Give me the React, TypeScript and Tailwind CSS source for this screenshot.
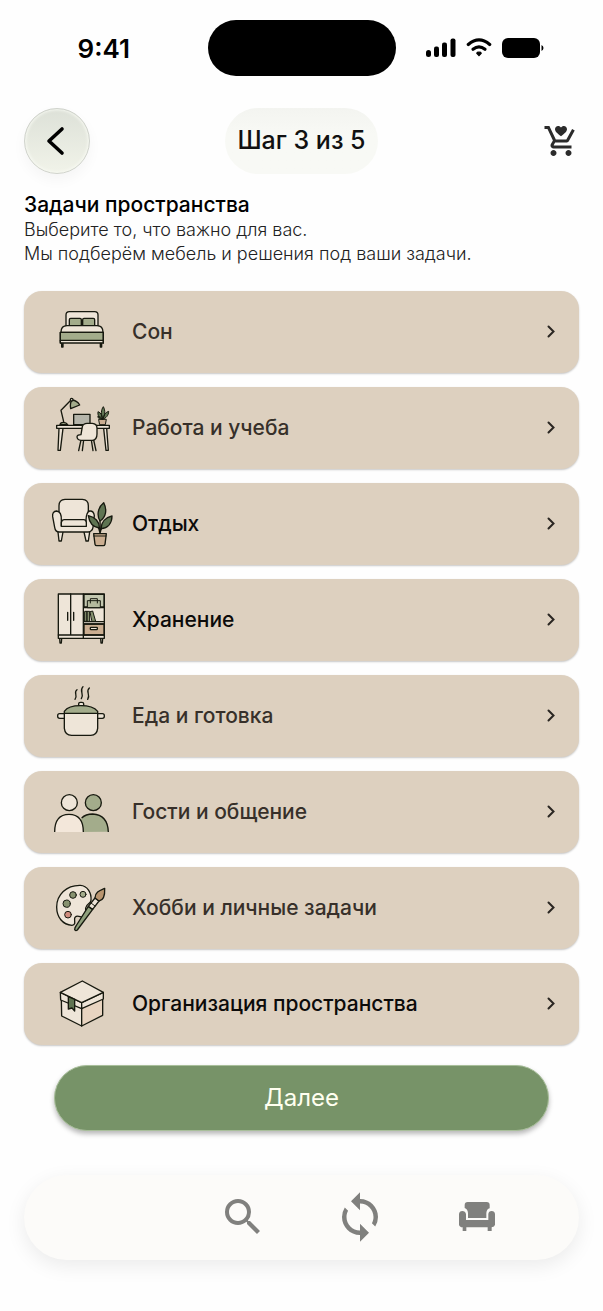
import { useState, type ReactNode } from 'react'
import { MdSearch, MdSync } from 'react-icons/md'

const INK = '#17190f'
const CREAM = '#eee5d8'
const SAGE = '#a3ac8b'
const LEAF = '#5f7452'
const TAN = '#cbae91'

function TaskIcon({ viewBox, children }: { viewBox: string; children: ReactNode }) {
  return (
    <svg
      viewBox={viewBox}
      className="w-18 h-18 shrink-0"
      fill="none"
      stroke={INK}
      strokeWidth="4"
      strokeLinejoin="round"
      strokeLinecap="round"
      aria-hidden="true"
    >
      {children}
    </svg>
  )
}

const BedIcon = () => (
  <TaskIcon viewBox="78 33 216 216">
    <path d="M138 123V90q0-10 10-10h76q10 0 10 10v33z" fill={CREAM} />
    <rect x="148" y="100" width="36" height="24" rx="4" fill={SAGE} />
    <rect x="188" y="100" width="36" height="24" rx="4" fill={SAGE} />
    <path d="M123 142q0-20 18-20h90q18 0 18 20z" fill={CREAM} />
    <path d="M121 142h129v26H121z" fill={SAGE} />
    <path d="M121 166h129v8H121z" fill={CREAM} />
    <path d="M121 142v32M250 142v32" />
    <path d="M125 175v11h4v-11M241 175v11h4v-11" fill={CREAM} />
  </TaskIcon>
)

const DeskIcon = () => (
  <TaskIcon viewBox="78 321 216 216">
    <path d="M131 410l-8-34 30-31" />
    <path d="M120 419q1-7 10-7t13 7z" fill={SAGE} />
    <path d="M152 371q-3-17 4-26 16 2 23 15z" fill={SAGE} />
    <circle cx="155" cy="344" r="4" fill={CREAM} />
    <path d="M161 419v-31h49v31z" fill="#b5b5aa" />
    <path d="M117 430l-3 66h7l8-66M251 430l7 66h7l-5-66" fill={CREAM} />
    <path d="M110 421h158v9H110z" fill={CREAM} />
    <path d="M237 403h22l-3 16h-16z" fill={TAN} strokeWidth="3" />
    <path
      d="M248 402c-6-12-5-28 2-37 7 12 5 27-2 37zM247 402c-12-3-14-12-13-22 9 3 14 13 13 22zM249 402c2-12 7-20 17-23 0 12-8 21-17 23zM247 403c-8 0-12-3-14-8 7-1 11 2 14 8z"
      fill={LEAF}
      strokeWidth="3"
    />
    <path d="M183 465l-7 32M191 465l-4 32M214 465l5 32M221 465l7 32" />
    <path
      d="M183 449l4-24q3-10 14-10h16q14 1 14 15v17q0 18-14 19h-34q-11-1-12-10 0-7 12-7z"
      fill={CREAM}
    />
  </TaskIcon>
)

const ArmchairIcon = () => (
  <TaskIcon viewBox="78 39 216 216">
    <path d="M114 171l3 27h7l5-27M192 171l6 27h7l4-27" fill={CREAM} />
    <path d="M117 118V92q0-18 18-19h52q18 1 18 19v48h-88z" fill={CREAM} />
    <path
      d="M124 135q1-25-14-27-14 1-12 17l6 32q2 14 14 14h87q12-2 14-14l4-35q-2-15-14-14-10 3-11 27v18h-74z"
      fill={CREAM}
    />
    <path d="M124 154v-12q2-8 9-8h58q7 0 8 8v12z" fill={CREAM} />
    <path d="M241 176l-1-42M240 175c-1-17-8-22-14-31M240 175c2-14 8-20 14-28" />
    <path
      d="M240 138c-10-16-7-41 11-55 11 22 7 44-11 55zM238 159c-18-2-30-15-33-37 20 4 34 18 33 37zM243 161c1-19 13-34 33-38 0 21-12 36-33 38z"
      fill={LEAF}
    />
    <path d="M221 176h38l-4 32q-1 4-5 4h-20q-4 0-5-4z" fill={TAN} />
    <path d="M221 183h37" strokeWidth="3" />
  </TaskIcon>
)

const CabinetIcon = () => (
  <TaskIcon viewBox="78 327 216 216">
    <path d="M119 490l1 14h4l1-14M242 490l1 14h4l1-14" fill={CREAM} />
    <path d="M115 357h138v133H115z" fill={CREAM} />
    <path d="M192 358h60v38h-60z" fill="#c3c7af" />
    <path d="M192 447h60v33h-60z" fill={TAN} />
    <path d="M115 480h138M152 357v123M190 357v133M193 398h60M193 440h60M193 447h60" />
    <path d="M143 412v24M161 412v24" />
    <path d="M202 397v-20h39v20z" fill="#b4ba9d" strokeWidth="3" />
    <path d="M211 384v-13h21v13" strokeWidth="3" />
    <path d="M195 409h6v30h-6zM202 409h7v30h-7zM211 410l7-2 9 31h-10z" fill="#87926f" strokeWidth="3" />
    <rect x="211" y="457" width="21" height="7" rx="2" fill={CREAM} />
  </TaskIcon>
)

const PotIcon = () => (
  <TaskIcon viewBox="78 30 216 216">
    <path d="M171 59c-12 9 4 16-6 29M189 50c-13 14 5 19-5 36M208 54c-13 12 5 17-5 34" />
    <rect x="113" y="131" width="28" height="14" rx="6" fill={CREAM} />
    <rect x="225" y="131" width="28" height="14" rx="6" fill={CREAM} />
    <path d="M176 107v-6q0-4 5-4h5q5 0 5 4v6z" fill={CREAM} />
    <path d="M133 130v45q2 20 22 21h57q19-1 21-21v-45z" fill={CREAM} />
    <path d="M133 130v-6q12-17 49-17t51 17v6z" fill={SAGE} />
  </TaskIcon>
)

const GuestsIcon = () => (
  <TaskIcon viewBox="78 318 216 216">
    <circle cx="220" cy="398" r="24" fill={SAGE} />
    <path d="M176 486v-27q9-26 40-27 46 0 49 53z" fill={SAGE} stroke="none" />
    <path d="M185 444q12-12 33-12 45 2 47 54" strokeLinecap="butt" />
    <circle cx="148" cy="398" r="24" fill={CREAM} />
    <path d="M104 486q0-53 43-53t43 53z" fill="#f3e7da" stroke="none" />
    <path d="M104 486q0-53 43-53t43 53" strokeLinecap="butt" />
  </TaskIcon>
)

const PaletteIcon = () => (
  <TaskIcon viewBox="78 30 216 216">
    <path
      d="M181 70c-42-1-71 29-71 65 0 30 18 54 46 55 15-1 4-17 9-24 7-8 15-1 21-1 16-1 10-16 11-27 2-13 15-12 16-23 2-23-11-44-32-45z"
      fill={CREAM}
    />
    <circle cx="159" cy="99" r="10" fill="#87926f" strokeWidth="3" />
    <circle cx="189" cy="97" r="9" fill={SAGE} strokeWidth="3" />
    <circle cx="140" cy="125" r="11" fill="#87926f" strokeWidth="3" />
    <circle cx="144" cy="158" r="10" fill="#d08d7e" strokeWidth="3" />
    <path d="M205 133l13 9-46 62q-5 4-8-1 0-6 4-11z" fill="#8fa07c" />
    <path d="M205 133l20-25 12 9-19 25z" fill={CREAM} />
    <path d="M225 108c0-17 13-22 29-29 1 20-1 36-17 38z" fill="#b9956f" />
    <path d="M213 123l12 9" strokeWidth="3" />
  </TaskIcon>
)

const BoxIcon = () => (
  <TaskIcon viewBox="78 318 216 216">
    <path d="M124 410l61 27v55l-60-30z" fill={CREAM} />
    <path d="M185 437l63-30v53l-63 32z" fill="#e8d4c0" />
    <path d="M121 391l64 31v18l-63-26z" fill={CREAM} />
    <path d="M185 422l65-31v20l-65 29z" fill={CREAM} />
    <path d="M187 357l63 34-65 31-64-31z" fill={CREAM} />
    <path d="M145 404l19 8v35l-8-9-11 3z" fill={LEAF} />
  </TaskIcon>
)

const tasks = [
  { label: 'Сон', Icon: BedIcon, strong: false },
  { label: 'Работа и учеба', Icon: DeskIcon, strong: false },
  { label: 'Отдых', Icon: ArmchairIcon, strong: true },
  { label: 'Хранение', Icon: CabinetIcon, strong: true },
  { label: 'Еда и готовка', Icon: PotIcon, strong: false },
  { label: 'Гости и общение', Icon: GuestsIcon, strong: false },
  { label: 'Хобби и личные задачи', Icon: PaletteIcon, strong: false },
  { label: 'Организация пространства', Icon: BoxIcon, strong: true },
]

function StatusBar() {
  return (
    <div className="grid grid-cols-[1fr_auto_1fr] items-center pt-5">
      <div className="text-center text-[26px] font-semibold">9:41</div>
      <div className="w-[188px] h-14 rounded-full bg-black" />
      <div className="flex items-center justify-center gap-2.5 pr-7">
        <svg viewBox="0 0 30 20" className="w-[30px] h-5" aria-hidden="true">
          <rect x="0" y="12" width="5" height="7" rx="2.5" />
          <rect x="8" y="8.5" width="5" height="10.5" rx="2" />
          <rect x="16" y="4.5" width="5" height="14.5" rx="2" />
          <rect x="24.5" y="0.5" width="5" height="18.5" rx="2" />
        </svg>
        <svg viewBox="0 0 26 20" className="w-[26px] h-5" fill="none" stroke="black" strokeWidth="3.2" strokeLinecap="round" aria-hidden="true">
          <path d="M2.3 6.5Q13-2.8 23.7 6.5" />
          <path d="M7 11.3Q13 6.3 19 11.3" />
          <path d="M13 14.2q2 0 2.2 1L13 17.6l-2.2-2.4q.2-1 2.2-1z" fill="black" strokeWidth="1.2" />
        </svg>
        <svg viewBox="0 0 42 20" className="w-[42px] h-5" aria-hidden="true">
          <rect x="0" y="0" width="38" height="20" rx="6" />
          <path d="M39.5 7q2 .8 2 3t-2 3z" />
        </svg>
      </div>
    </div>
  )
}

export default function App() {
  const [selected, setSelected] = useState<string | null>(null)

  return (
    <div className="min-h-screen bg-[#fefefe] text-black font-[Inter,sans-serif]">
      <StatusBar />

      <main className="px-6">
        <header className="mt-8 grid grid-cols-[1fr_auto_1fr] items-center">
          <button
            type="button"
            aria-label="Назад"
            className="w-[66px] h-[66px] rounded-full border border-[#d0d3cc] bg-linear-to-b from-[#dde1d8] to-[#f1f3e9] shadow-[inset_0_0_3px_1px_#f8faf3,0_6px_14px_rgba(0,0,0,0.04)] flex items-center justify-center"
          >
            <svg viewBox="0 0 20 30" className="w-5 h-[30px] -ml-1" fill="none" stroke="black" strokeWidth="3.6" strokeLinecap="round" strokeLinejoin="round" aria-hidden="true">
              <path d="M17 3L4 15L17 27" />
            </svg>
          </button>
          <h1 className="h-[66px] px-3 rounded-full bg-linear-to-b from-[#f3f4f0] to-[#f8f9f5] to-40% flex items-center text-[25px] font-medium text-[#111]">
            Шаг 3 из 5
          </h1>
          <button type="button" aria-label="Корзина" className="justify-self-end">
            <svg viewBox="0 0 24 24" className="w-9 h-9" fill="#2b2b2b" aria-hidden="true">
              <path d="M7 18c-1.1 0-1.99.9-1.99 2S5.9 22 7 22s2-.9 2-2-.9-2-2-2zm10 0c-1.1 0-1.99.9-1.99 2s.89 2 1.99 2 2-.9 2-2-.9-2-2-2zm-9.83-3.25l.03-.12.9-1.63h7.45c.75 0 1.41-.41 1.75-1.03l3.86-7.01L19.42 4h-.01l-1.1 2-2.76 5H8.53l-.13-.27L6.16 6l-.95-2-.94-2H1v2h2l3.6 7.59-1.35 2.45c-.16.28-.25.61-.25.96 0 1.1.9 2 2 2h12v-2H7.42c-.13 0-.25-.11-.25-.25z" />
              <path d="M12 8.9C9.5 6.7 8 5.6 8 4.1 8 2.9 8.9 2 10.1 2c.8 0 1.5.4 1.9 1 .4-.6 1.1-1 1.9-1C15.1 2 16 2.9 16 4.1c0 1.5-1.5 2.6-4 4.8z" />
            </svg>
          </button>
        </header>

        <h2 className="mt-[18px] text-[21px] leading-[26px] font-medium">Задачи пространства</h2>
        <p className="text-lg leading-6 font-light text-[#222]">
          Выберите то, что важно для вас.
          <br />
          Мы подберём мебель и решения под ваши задачи.
        </p>

        <ul className="mt-[25px] flex flex-col gap-3.5">
          {tasks.map(({ label, Icon, strong }) => (
            <li key={label}>
              <button
                type="button"
                aria-pressed={selected === label}
                onClick={() => setSelected(label)}
                className="w-full h-[82px] px-[22px] rounded-[18px] bg-[#ddd0bf] shadow-[0_1px_2px_rgba(0,0,0,0.22)] flex items-center gap-3.5 text-left"
              >
                <Icon />
                <span className={`flex-1 text-[21px] font-medium ${strong ? 'text-[#0c0b0a]' : 'text-[#37302a]'}`}>
                  {label}
                </span>
                <svg viewBox="0 0 12 16" className="w-3 h-4" fill="none" stroke="#2a2622" strokeWidth="2" strokeLinecap="round" aria-hidden="true">
                  <path d="M3.5 2.5l5 5-5 5" />
                </svg>
              </button>
            </li>
          ))}
        </ul>

        <div className="mt-5 px-[30px]">
          <button
            type="button"
            className="w-full h-[66px] rounded-full border border-[#a9bf9b] bg-[#779368] shadow-[0_3px_5px_rgba(0,0,0,0.28)] text-2xl text-[#fffff0]"
          >
            Далее
          </button>
        </div>

        <nav className="mt-11 h-[85px] px-11 pb-0.5 rounded-full bg-[#fcfbf9] shadow-[0_6px_20px_rgba(0,0,0,0.08)] grid grid-cols-4 items-center text-[#80807e]">
          <button type="button" aria-label="Поиск" className="col-start-2 justify-self-center">
            <MdSearch className="w-12 h-12" />
          </button>
          <button type="button" aria-label="Обновить" className="justify-self-center">
            <MdSync className="w-[54px] h-[54px]" />
          </button>
          <button type="button" aria-label="Мебель" className="justify-self-center">
            <svg viewBox="0 0 108 87" className="w-9 h-[29px]" fill="currentColor" aria-hidden="true">
              <path d="M17 18V9q0-9 9-9h57q9 0 9 9v10q-9 2-10 14v15H27V33q-1-12-10-15z" />
              <path d="M0 36q1-9 10-9t11 9v18h67V36q1-9 10-9t10 9v32q-1 7-10 8v11H86V76H22v11H11V76Q1 75 0 68z" />
            </svg>
          </button>
        </nav>
        <div className="h-[51px]" />
      </main>
    </div>
  )
}
